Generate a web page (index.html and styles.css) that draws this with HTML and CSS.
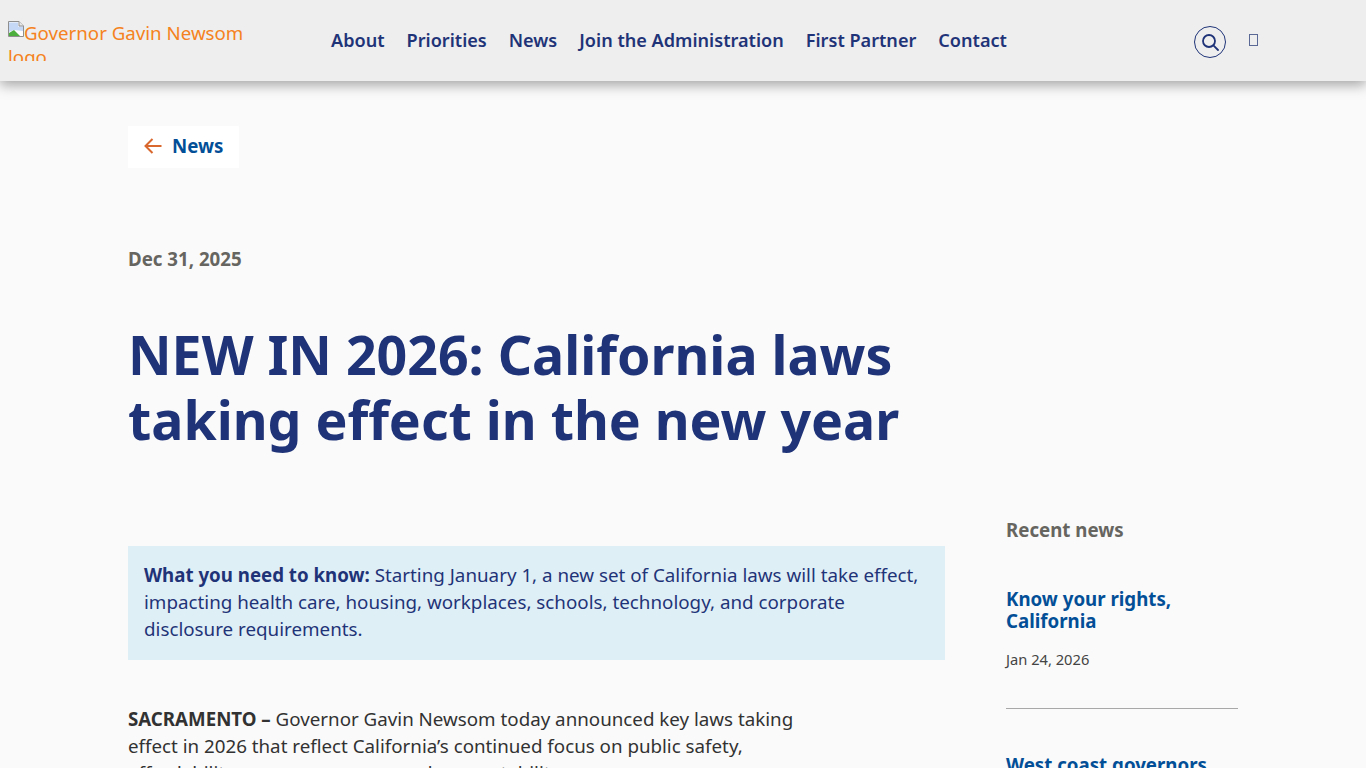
FILE: index.html
```html
<!DOCTYPE html>
<html lang="en">
<head>
    <meta charset="UTF-8">
    <meta name="viewport" content="width=device-width, initial-scale=1.0">
    <title>NEW IN 2026: California laws taking effect in the new year</title>
    <link rel="stylesheet" href="styles.css">
</head>
<body>
    <!-- Header -->
    <header class="site-header">
        <a class="logo" href="#">
            <svg class="logo-broken" width="16" height="16" viewBox="0 0 16 16">
                <path d="M0.5 0.5H11L15.5 5V15.5H0.5Z" fill="#fff" stroke="#8f8f8f"/>
                <path d="M1 11V1.5H10V5.5H15V10L6 9Z" fill="#c5d8f5"/>
                <path d="M1 15V12L6 9L12 15Z" fill="#4caf3e"/>
                <path d="M11 0.5V5H15.5" fill="#e8e8e8" stroke="#8f8f8f"/>
            </svg>Governor Gavin Newsom logo
        </a>
        <nav class="main-nav">
            <a href="#">About</a>
            <a href="#">Priorities</a>
            <a href="#">News</a>
            <a href="#">Join the Administration</a>
            <a href="#">First Partner</a>
            <a href="#">Contact</a>
        </nav>
        <div class="header-tools">
            <button class="search-button" aria-label="Search">
                <svg width="18" height="18" viewBox="0 0 18 18" fill="none" stroke="#1f3478" stroke-width="1.8">
                    <circle cx="8" cy="8" r="6"/>
                    <path d="M12.4 12.4L17 17" stroke-linecap="round"/>
                </svg>
            </button>
            <span class="missing-glyph"></span>
        </div>
    </header>

    <main class="page">
        <a class="back-link" href="#">
            <svg width="18" height="16" viewBox="0 0 18 16" fill="none" stroke="#d9682f" stroke-width="2">
                <path d="M17.5 8H1.5M8.5 1L1.5 8L8.5 15"/>
            </svg>
            News
        </a>

        <p class="post-date">Dec 31, 2025</p>
        <h1 class="post-title">NEW IN 2026: California laws taking effect in the new year</h1>

        <div class="post-layout">
            <article class="post-body">
                <div class="summary">
                    <strong>What you need to know:</strong> Starting January 1, a new set of California laws will take effect, impacting health care, housing, workplaces, schools, technology, and corporate disclosure requirements.
                </div>
                <p class="lead"><strong>SACRAMENTO –</strong> Governor Gavin Newsom today announced key laws taking effect in 2026 that reflect California’s continued focus on public safety, affordability, consumer access and accountability</p>
            </article>

            <aside class="recent">
                <h2 class="recent-title">Recent news</h2>
                <div class="recent-item">
                    <a class="recent-link" href="#">Know your rights, California</a>
                    <p class="recent-date">Jan 24, 2026</p>
                </div>
                <div class="recent-item">
                    <a class="recent-link" href="#">West coast governors</a>
                </div>
            </aside>
        </div>
    </main>
</body>
</html>
```

FILE: styles.css
```css
html {
    overflow: hidden;
    height: 100%;
}
body {
    margin: 0;
    height: 100vh;
    overflow: hidden;
    background-color: #fafafa;
    font-family: "Noto Sans", sans-serif;
    font-size: 18.7px;
    line-height: 27px;
    color: #323232;
}
a {
    text-decoration: none;
}

/* Header */
.site-header {
    display: flex;
    align-items: center;
    height: 81px;
    background-color: #eeeeee;
    box-shadow: 0 4px 12px rgba(0, 0, 0, 0.35);
    padding-left: 8px;
}
.logo {
    display: block;
    flex: none;
    width: 250px;
    height: 40px;
    margin-top: 1px;
    overflow: hidden;
    color: #f58220;
    line-height: 24px;
}
.logo-broken {
    vertical-align: 3px;
}
.main-nav {
    display: flex;
    gap: 22px;
    margin-left: 73px;
}
.main-nav a {
    color: #1f3478;
    font-size: 18.1px;
    font-weight: 600;
}
.header-tools {
    display: flex;
    align-items: center;
    gap: 23px;
    margin-left: auto;
    margin-right: 108px;
}
.search-button {
    display: flex;
    align-items: center;
    justify-content: center;
    width: 32px;
    height: 32px;
    margin-top: 2px;
    padding: 0;
    border: 1px solid #1f3478;
    border-radius: 50%;
    background: none;
}
.missing-glyph {
    width: 7px;
    height: 10px;
    border: 1px solid #5a6896;
    margin-bottom: 2px;
}

/* Article */
.page {
    padding: 45px 128px 0;
}
.back-link {
    display: inline-flex;
    align-items: center;
    gap: 10px;
    height: 38px;
    padding: 0 16px 4px;
    background-color: #ffffff;
    color: #034f97;
    font-weight: 700;
}
.back-link svg {
    margin-top: 2px;
}
.post-date {
    margin: 77px 0 0;
    color: #666560;
    font-weight: 700;
}
.post-title {
    margin: 50px 0 0;
    max-width: 800px;
    color: #1f3478;
    font-size: 53.65px;
    line-height: 65px;
    font-weight: 700;
}
.post-layout {
    display: flex;
    gap: 61px;
    margin-top: 64px;
}
.post-body {
    flex: none;
    width: 817px;
}
.summary {
    margin-top: 30px;
    padding: 15px 16px 17px;
    background-color: #dfeff6;
    color: #1f3478;
    font-size: 18.8px;
}
.lead {
    margin: 45px 0 0;
    max-width: 680px;
    font-size: 18.75px;
}
.summary strong, .lead strong {
    font-size: 18.7px;
}
.recent {
    width: 232px;
}
.recent-title {
    margin: 0;
    color: #666560;
    font-size: 18.7px;
    line-height: 27px;
    font-weight: 700;
}
.recent-item {
    padding-top: 45px;
    padding-bottom: 38px;
    border-bottom: 1px solid #a8a8a8;
}
.recent-item:last-child {
    border-bottom: none;
}
.recent-link {
    display: block;
    color: #034f97;
    font-size: 18.7px;
    line-height: 22px;
    font-weight: 700;
}
.recent-date {
    margin: 17px 0 0;
    color: #444444;
    font-size: 14.7px;
    line-height: 21px;
}
```
